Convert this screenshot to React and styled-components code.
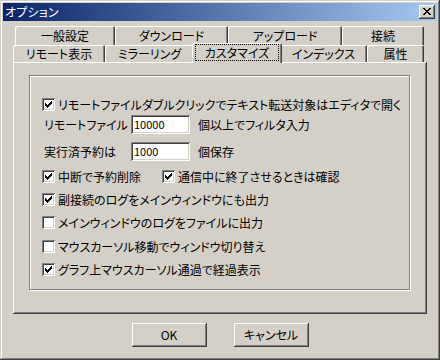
import React from 'react';
import styled, { createGlobalStyle } from 'styled-components';

const Global = createGlobalStyle`
  html, body { margin: 0; padding: 0; background: #D4D0C8; }
  body { font-family: "Noto Sans CJK JP", sans-serif; font-size: 12px; }
`;

const Window = styled.div`
  width: 440px;
  height: 360px;
  box-sizing: border-box;
  padding: 3px;
  background: #D4D0C8;
  box-shadow: inset -1px -1px #404040, inset 1px 1px #D4D0C8, inset -2px -2px #808080, inset 2px 2px #fff;
  display: flex;
  flex-direction: column;
  font-family: "Noto Sans CJK JP", sans-serif;
  font-size: 12px;
  color: #000;
  font-feature-settings: "palt";
`;

const TitleBar = styled.div`
  height: 18px;
  display: flex;
  align-items: center;
  justify-content: space-between;
  background: linear-gradient(to right, #0A246A, #A6CAF0);
  padding: 0 2px 0 2px;
  color: #fff;
`;

const TitleText = styled.span`
  font-size: 12px;
  line-height: 18px;
  letter-spacing: 0.2px;
`;

const CloseButton = styled.div`
  width: 16px;
  height: 14px;
  box-sizing: border-box;
  background: #D4D0C8;
  box-shadow: inset -1px -1px #404040, inset 1px 1px #fff, inset -2px -2px #808080, inset 2px 2px #D4D0C8;
  display: flex;
  align-items: center;
  justify-content: center;
  padding: 0 1px 1px 0;
`;

const TabControl = styled.div`
  margin: 5px 0 0 10px;
  width: 414px;
  display: flex;
  flex-direction: column;
`;

const BackRow = styled.div`
  height: 17px;
  display: flex;
  align-items: flex-start;
  padding-left: 2px;
`;

const FrontRow = styled.div`
  height: 19px;
  display: flex;
  align-items: flex-end;
  position: relative;
  z-index: 2;
`;

const Tab = styled.div`
  width: ${p => p.$w}px;
  height: ${p => (p.$back ? 19 : 17)}px;
  flex: none;
  box-sizing: border-box;
  background: #D4D0C8;
  border-radius: 2px 2px 0 0;
  box-shadow: inset 1px 1px #fff, inset -1px 0 #404040, inset -2px 0 #808080;
  display: flex;
  align-items: center;
  justify-content: center;
  padding-top: ${p => (p.$back ? 3 : 0)}px;
  padding-bottom: ${p => (p.$back ? 2 : 0)}px;
  line-height: 14px;
  white-space: nowrap;
`;

const ActiveTab = styled(Tab)`
  height: 20px;
  margin: 0 -2px -1px -2px;
  position: relative;
  z-index: 3;
  box-shadow: inset 1px 1px #fff, inset -1px 0 #404040, inset -2px 0 #808080;
  padding: 1px 2px 2px 2px;
`;

const FocusLabel = styled.span`
  flex: 1;
  align-self: stretch;
  display: flex;
  align-items: center;
  justify-content: center;
  outline: 1px dotted #000;
  outline-offset: -1px;
  margin: 0 1px;
`;

const Panel = styled.div`
  height: 252px;
  box-sizing: border-box;
  background: #D4D0C8;
  box-shadow: inset -1px -1px #404040, inset 1px 1px #fff, inset -2px -2px #808080;
  padding: 13px 17px 0 16px;
  position: relative;
  z-index: 1;
`;

const GroupBox = styled.div`
  height: 215px;
  box-sizing: border-box;
  border: 1px solid #808080;
  box-shadow: 1px 1px 0 #fff, inset 1px 1px 0 #fff;
  padding: 22px 0 0 12px;
  display: flex;
  flex-direction: column;
`;

const Row = styled.div`
  display: flex;
  align-items: center;
  height: ${p => (p.$input ? 19 : 13)}px;
  margin-top: ${p => p.$mt || 0}px;
  white-space: nowrap;
  line-height: 13px;
`;

const CheckItem = styled.div`
  display: flex;
  align-items: center;
  width: ${p => (p.$w ? `${p.$w}px` : 'auto')};
  flex: none;
`;

const CheckBox = styled.span`
  width: 13px;
  height: 13px;
  box-sizing: border-box;
  background: #fff;
  box-shadow: inset 1px 1px #808080, inset -1px -1px #fff, inset 2px 2px #404040, inset -2px -2px #D4D0C8;
  display: inline-flex;
  align-items: center;
  justify-content: center;
  flex: none;
`;

const CheckLabel = styled.span`
  margin-left: 3px;
`;

const FieldLabel = styled.span`
  width: 87px;
  padding-left: 2px;
  flex: none;
`;

const TextBox = styled.div`
  width: 59px;
  height: 19px;
  box-sizing: border-box;
  background: #fff;
  box-shadow: inset 1px 1px #808080, inset -1px -1px #fff, inset 2px 2px #404040, inset -2px -2px #D4D0C8;
  padding: 0 0 0 3px;
  display: flex;
  align-items: center;
  font-size: 11px;
  flex: none;
`;

const Suffix = styled.span`
  margin-left: 8px;
`;

const ButtonBar = styled.div`
  display: flex;
  justify-content: center;
  gap: 27px;
  margin-top: 9px;
  padding-left: 0;
`;

const Button = styled.div`
  width: 75px;
  height: 24px;
  box-sizing: border-box;
  background: #D4D0C8;
  box-shadow: inset -1px -1px #404040, inset 1px 1px #fff, inset -2px -2px #808080, inset 2px 2px #D4D0C8;
  display: flex;
  align-items: center;
  justify-content: center;
  padding-bottom: 1px;
`;

const Check = ({ on }) => (
  <CheckBox>
    {on && (
      <svg width="7" height="7" viewBox="0 0 7 7">
        <path d="M0 2h1v1h1v1h1V3h1V2h1V1h1V0h1v3H6v1H5v1H4v1H3v1H2V6H1V5H0z" fill="#000" />
      </svg>
    )}
  </CheckBox>
);

const CheckRow = ({ on, label, mt }) => (
  <Row $mt={mt}>
    <CheckItem>
      <Check on={on} />
      <CheckLabel>{label}</CheckLabel>
    </CheckItem>
  </Row>
);

export default function App() {
  return (
    <>
      <Global />
      <Window>
        <TitleBar>
          <TitleText>オプション</TitleText>
          <CloseButton>
            <svg width="8" height="7" viewBox="0 0 8 7">
              <path d="M0 0h2v1h1v1h2V1h1V0h2v1H7v1H6v1H5v1h1v1h1v1h1v1H6V6H5V5H3v1H2v1H0V6h1V5h1V4h1V3H2V2H1V1H0z" fill="#000" />
            </svg>
          </CloseButton>
        </TitleBar>

        <TabControl>
          <BackRow>
            <Tab $back $w={100}>一般設定</Tab>
            <Tab $back $w={113}>ダウンロード</Tab>
            <Tab $back $w={114}>アップロード</Tab>
            <Tab $back $w={82}>接続</Tab>
          </BackRow>
          <FrontRow>
            <Tab $w={92}>リモート表示</Tab>
            <Tab $w={89}>ミラーリング</Tab>
            <ActiveTab $w={90}>
              <FocusLabel>カスタマイズ</FocusLabel>
            </ActiveTab>
            <Tab $w={87}>インデックス</Tab>
            <Tab $w={57}>属性</Tab>
          </FrontRow>
          <Panel>
            <GroupBox>
              <CheckRow on mt={0} label="リモートファイルダブルクリックでテキスト転送対象はエディタで開く" />
              <Row $input $mt={4}>
                <FieldLabel>リモートファイル</FieldLabel>
                <TextBox>10000</TextBox>
                <Suffix>個以上でフィルタ入力</Suffix>
              </Row>
              <Row $input $mt={8}>
                <FieldLabel>実行済予約は</FieldLabel>
                <TextBox>1000</TextBox>
                <Suffix>個保存</Suffix>
              </Row>
              <Row $mt={9}>
                <CheckItem $w={120}>
                  <Check on />
                  <CheckLabel>中断で予約削除</CheckLabel>
                </CheckItem>
                <CheckItem>
                  <Check on />
                  <CheckLabel>通信中に終了させるときは確認</CheckLabel>
                </CheckItem>
              </Row>
              <CheckRow on mt={10} label="副接続のログをメインウィンドウにも出力" />
              <CheckRow mt={10} label="メインウィンドウのログをファイルに出力" />
              <CheckRow mt={11} label="マウスカーソル移動でウィンドウ切り替え" />
              <CheckRow on mt={10} label="グラフ上マウスカーソル通過で経過表示" />
            </GroupBox>
          </Panel>
        </TabControl>

        <ButtonBar>
          <Button>OK</Button>
          <Button>キャンセル</Button>
        </ButtonBar>
      </Window>
    </>
  );
}
